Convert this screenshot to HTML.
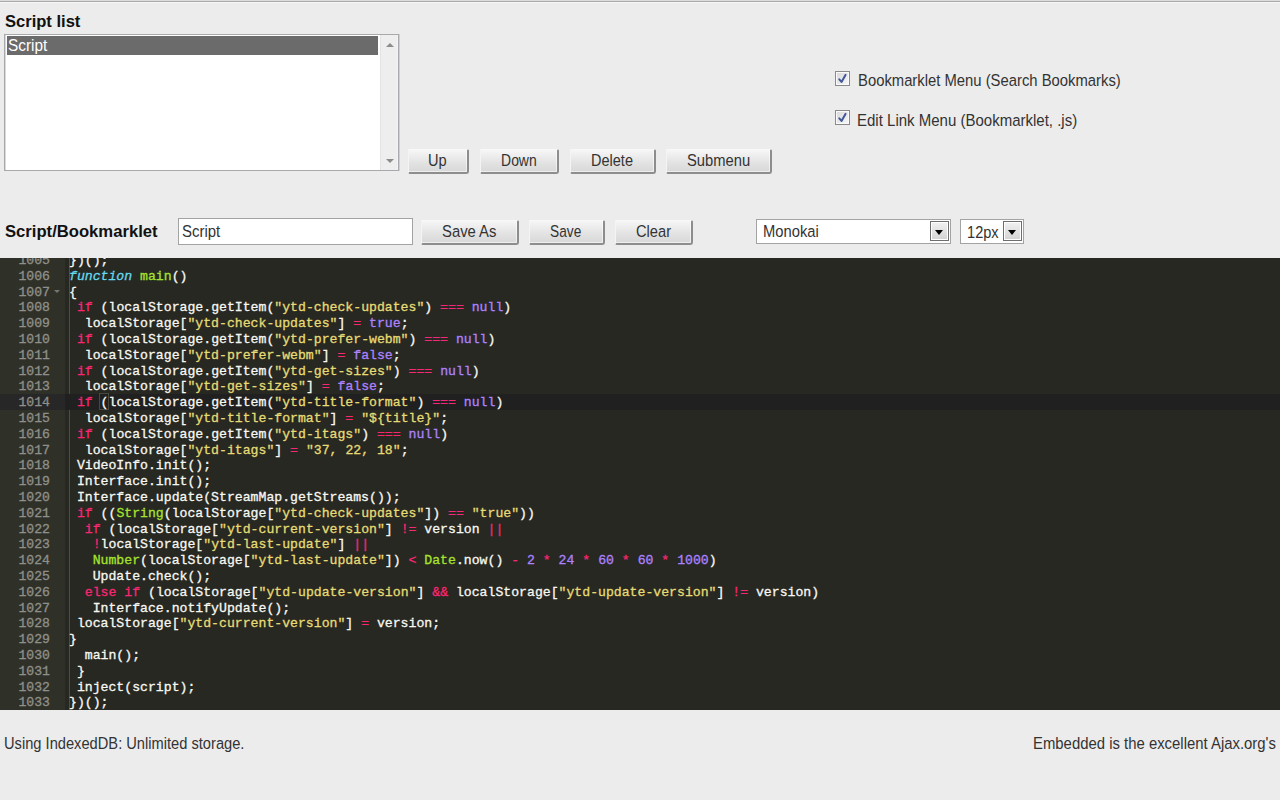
<!DOCTYPE html>
<html><head><meta charset="utf-8">
<style>
html,body{margin:0;padding:0;width:1280px;height:800px;overflow:hidden;background:#ececec;font-family:"Liberation Sans",sans-serif;color:#222;}
.tx{position:absolute;white-space:pre;font-family:"Liberation Sans",sans-serif;}
.tx.b{font-weight:bold;}
.topline{position:absolute;left:0;top:0;width:1280px;height:1px;background:#dcdcdc;}
.topline2{position:absolute;left:0;top:1px;width:1280px;height:1px;background:#a9a9a9;}
.topline3{position:absolute;left:0;top:2px;width:1280px;height:1px;background:#f7f7f7;}
.list{position:absolute;left:4px;top:34px;width:393px;height:135px;border:1px solid #a7a9ad;background:#fff;box-shadow:inset 1px 0 0 #d9d9d9,1px 0 0 #cdd0d4;}
.sel{position:absolute;left:2px;top:1px;width:371px;height:19px;background:#6b6b6b;}
.sb{position:absolute;right:0;top:0;width:18px;height:135px;background:#eeeeee;border-left:1px solid #e3e3e3;border-right:1px solid #f4f4f4;box-sizing:border-box;}
.sb .up{position:absolute;left:4.5px;top:8px;border-left:4px solid transparent;border-right:4px solid transparent;border-bottom:4.5px solid #8c8c8c;}
.sb .dn{position:absolute;left:4.5px;top:124px;border-left:4px solid transparent;border-right:4px solid transparent;border-top:4.5px solid #8c8c8c;}
.btn{position:absolute;height:25px;box-sizing:border-box;border-top:1px solid #f8f8f8;border-left:1px solid #f4f4f4;border-right:2px solid #8d8d8d;border-bottom:2px solid #8d8d8d;border-radius:0 2px 3px 2px;background:linear-gradient(#f6f6f6,#e2e2e2 60%,#d8d8d8);box-shadow:inset -1px -1px 0 rgba(255,255,255,0.55);}
.inp{position:absolute;box-sizing:border-box;border:1px solid #a3a3a3;background:#fff;height:27px;}
.selbox{position:absolute;box-sizing:border-box;border:1px solid #a3a3a3;background:#fff;height:25px;}
.dd{position:absolute;box-sizing:border-box;top:1px;width:19px;height:20px;border:1px solid #6e6e6e;background:linear-gradient(#f2f2f2,#d2d2d2);box-shadow:inset 0 0 0 1px #fff;}
.dd:after{content:"";position:absolute;left:4px;top:8px;border-left:4.5px solid transparent;border-right:4.5px solid transparent;border-top:5px solid #000;}
.cb{position:absolute;width:15px;height:15px;box-sizing:border-box;border:1px solid #8a8a8a;background:linear-gradient(135deg,#d8d8d8,#f8f8f8);box-shadow:inset 0 0 0 1px #fafafa;}
.cb svg{position:absolute;left:-1px;top:-1px;}
.editor{position:absolute;left:0;top:258px;width:1280px;height:452px;background:#272822;overflow:hidden;}
.gutter{position:absolute;left:0;top:0;width:65px;height:452px;background:#2f3129;}
.actg{position:absolute;left:0;width:65px;height:15.8px;background:#272727;}
.actc{position:absolute;left:65px;width:1215px;height:15.8px;background:#202020;}
.brk{position:absolute;box-sizing:border-box;border:1px solid #49483e;}
.fold{position:absolute;left:54px;border-left:3px solid transparent;border-right:3px solid transparent;border-top:3.5px solid #75756f;}
.guide{position:absolute;left:69px;width:1px;background:#4e4e47;}
.lines{position:absolute;left:0;top:-5px;width:1280px;}
.ln{position:relative;height:15.8px;}
.num{position:absolute;left:0;width:50px;text-align:right;font-family:"Liberation Mono",monospace;font-size:13.17px;line-height:15.8px;color:#8f908a;white-space:pre;-webkit-text-stroke:0.3px currentColor;}
.code{position:absolute;left:69px;font-family:"Liberation Mono",monospace;font-size:13.17px;line-height:15.8px;color:#f8f8f2;white-space:pre;-webkit-text-stroke:0.3px currentColor;}
.k{color:#f92672}.c{color:#ae81ff}.s{color:#e6db74}.f{color:#a6e22e}.st{color:#66d9ef;font-style:italic}

</style></head><body>
<div class="topline"></div><div class="topline2"></div><div class="topline3"></div>
<div class="list"><div class="sel"></div><div class="sb"><div class="up"></div><div class="dn"></div></div></div>
<div class="btn" style="left:408px;top:149px;width:61px"></div>
<div class="btn" style="left:480px;top:149px;width:79px"></div>
<div class="btn" style="left:570px;top:149px;width:86px"></div>
<div class="btn" style="left:666px;top:149px;width:106px"></div>
<div class="cb" style="left:835px;top:71px"><svg width="15" height="15"><polyline points="4.3,8.3 6.5,10.9 10.5,3.9" fill="none" stroke="#42569a" stroke-width="2.0" stroke-linecap="round" stroke-linejoin="round"/></svg></div>
<div class="cb" style="left:835px;top:110px"><svg width="15" height="15"><polyline points="4.3,8.3 6.5,10.9 10.5,3.9" fill="none" stroke="#42569a" stroke-width="2.0" stroke-linecap="round" stroke-linejoin="round"/></svg></div>
<div class="inp" style="left:178px;top:218px;width:235px"></div>
<div class="btn" style="left:421px;top:220px;width:98px"></div>
<div class="btn" style="left:529px;top:220px;width:76px"></div>
<div class="btn" style="left:615px;top:220px;width:78px"></div>
<div class="selbox" style="left:756px;top:219px;width:195px"><div class="dd" style="left:173px"></div></div>
<div class="selbox" style="left:960px;top:219px;width:64px"><div class="dd" style="left:42px"></div></div>
<div class="tx b" style="left:5.25px;top:13.5px;font-size:16.6px;line-height:16.6px;color:#111;transform:scale(0.9966,1.0);transform-origin:1px 7px;">Script list</div>
<div class="tx" style="left:8.40px;top:37.1px;font-size:15px;line-height:15px;color:#fff;transform:scale(1.0257,1.1);transform-origin:1px 7.5px;">Script</div>
<div class="tx" style="left:428.40px;top:152.4px;font-size:15px;line-height:15px;color:#333;transform:scale(0.9722,1.1);transform-origin:1px 7.5px;">Up</div>
<div class="tx" style="left:500.90px;top:152.3px;font-size:15px;line-height:15px;color:#333;transform:scale(0.9284,1.1);transform-origin:1px 7.5px;">Down</div>
<div class="tx" style="left:590.70px;top:152.3px;font-size:15px;line-height:15px;color:#333;transform:scale(0.9667,1.1);transform-origin:1px 7.5px;">Delete</div>
<div class="tx" style="left:686.80px;top:152.3px;font-size:15px;line-height:15px;color:#333;transform:scale(0.9831,1.1);transform-origin:1px 7.5px;">Submenu</div>
<div class="tx" style="left:857.50px;top:72.2px;font-size:15px;line-height:15px;color:#333;transform:scale(0.9879,1.1);transform-origin:1px 7.5px;">Bookmarklet Menu (Search Bookmarks)</div>
<div class="tx" style="left:856.90px;top:112.0px;font-size:15px;line-height:15px;color:#333;transform:scale(1.0005,1.1);transform-origin:1px 7.5px;">Edit Link Menu (Bookmarklet, .js)</div>
<div class="tx b" style="left:5.00px;top:224.0px;font-size:16.6px;line-height:16.6px;color:#111;transform:scale(1.0026,1.0);transform-origin:1px 7px;">Script/Bookmarklet</div>
<div class="tx" style="left:182.40px;top:223.3px;font-size:15px;line-height:15px;color:#333;transform:scale(0.9973,1.1);transform-origin:1px 7.5px;">Script</div>
<div class="tx" style="left:441.60px;top:223.1px;font-size:15px;line-height:15px;color:#333;transform:scale(0.9889,1.1);transform-origin:1px 7.5px;">Save As</div>
<div class="tx" style="left:550.40px;top:223.2px;font-size:15px;line-height:15px;color:#333;transform:scale(0.9121,1.1);transform-origin:1px 7.5px;">Save</div>
<div class="tx" style="left:635.70px;top:223.35px;font-size:15px;line-height:15px;color:#333;transform:scale(0.9771,1.1);transform-origin:1px 7.5px;">Clear</div>
<div class="tx" style="left:762.50px;top:223.1px;font-size:15px;line-height:15px;color:#333;transform:scale(0.9836,1.1);transform-origin:1px 7.5px;">Monokai</div>
<div class="tx" style="left:967.40px;top:223.5px;font-size:15px;line-height:15px;color:#333;transform:scale(0.9710,1.1);transform-origin:1px 7.5px;">12px</div>
<div class="tx" style="left:3.50px;top:735.2px;font-size:15px;line-height:15px;color:#333;transform:scale(0.9775,1.1);transform-origin:1px 7.5px;">Using IndexedDB: Unlimited storage.</div>
<div class="tx" style="left:1032.80px;top:735.1px;font-size:15px;line-height:15px;color:#333;transform:scale(0.9926,1.1);transform-origin:1px 7.5px;">Embedded is the excellent Ajax.org&#x27;s</div>
<div class="editor">
<div class="gutter"></div>
<div class="actg" style="top:136px"></div>
<div class="actc" style="top:136px"></div>
<div class="guide" style="top:0;height:135.5px"></div>
<div class="guide" style="top:151.6px;height:300.4px"></div>
<div class="brk" style="left:99.4px;top:135.2px;width:10px;height:17px"></div>
<div class="fold" style="top:32px"></div>
<div class="lines">
<div class="ln"><div class="num">1005</div><div class="code">})();</div></div>
<div class="ln"><div class="num">1006</div><div class="code"><span class="st">function</span> <span class="f">main</span>()</div></div>
<div class="ln"><div class="num">1007</div><div class="code">{</div></div>
<div class="ln"><div class="num">1008</div><div class="code"> <span class="k">if</span> (localStorage.getItem(<span class="s">"ytd-check-updates"</span>) <span class="k">===</span> <span class="c">null</span>)</div></div>
<div class="ln"><div class="num">1009</div><div class="code">  localStorage[<span class="s">"ytd-check-updates"</span>] <span class="k">=</span> <span class="c">true</span>;</div></div>
<div class="ln"><div class="num">1010</div><div class="code"> <span class="k">if</span> (localStorage.getItem(<span class="s">"ytd-prefer-webm"</span>) <span class="k">===</span> <span class="c">null</span>)</div></div>
<div class="ln"><div class="num">1011</div><div class="code">  localStorage[<span class="s">"ytd-prefer-webm"</span>] <span class="k">=</span> <span class="c">false</span>;</div></div>
<div class="ln"><div class="num">1012</div><div class="code"> <span class="k">if</span> (localStorage.getItem(<span class="s">"ytd-get-sizes"</span>) <span class="k">===</span> <span class="c">null</span>)</div></div>
<div class="ln"><div class="num">1013</div><div class="code">  localStorage[<span class="s">"ytd-get-sizes"</span>] <span class="k">=</span> <span class="c">false</span>;</div></div>
<div class="ln"><div class="num">1014</div><div class="code"> <span class="k">if</span> (localStorage.getItem(<span class="s">"ytd-title-format"</span>) <span class="k">===</span> <span class="c">null</span>)</div></div>
<div class="ln"><div class="num">1015</div><div class="code">  localStorage[<span class="s">"ytd-title-format"</span>] <span class="k">=</span> <span class="s">"${title}"</span>;</div></div>
<div class="ln"><div class="num">1016</div><div class="code"> <span class="k">if</span> (localStorage.getItem(<span class="s">"ytd-itags"</span>) <span class="k">===</span> <span class="c">null</span>)</div></div>
<div class="ln"><div class="num">1017</div><div class="code">  localStorage[<span class="s">"ytd-itags"</span>] <span class="k">=</span> <span class="s">"37, 22, 18"</span>;</div></div>
<div class="ln"><div class="num">1018</div><div class="code"> VideoInfo.init();</div></div>
<div class="ln"><div class="num">1019</div><div class="code"> Interface.init();</div></div>
<div class="ln"><div class="num">1020</div><div class="code"> Interface.update(StreamMap.getStreams());</div></div>
<div class="ln"><div class="num">1021</div><div class="code"> <span class="k">if</span> ((<span class="f">String</span>(localStorage[<span class="s">"ytd-check-updates"</span>]) <span class="k">==</span> <span class="s">"true"</span>))</div></div>
<div class="ln"><div class="num">1022</div><div class="code">  <span class="k">if</span> (localStorage[<span class="s">"ytd-current-version"</span>] <span class="k">!=</span> version <span class="k">||</span></div></div>
<div class="ln"><div class="num">1023</div><div class="code">   <span class="k">!</span>localStorage[<span class="s">"ytd-last-update"</span>] <span class="k">||</span></div></div>
<div class="ln"><div class="num">1024</div><div class="code">   <span class="f">Number</span>(localStorage[<span class="s">"ytd-last-update"</span>]) <span class="k">&lt;</span> <span class="f">Date</span>.now() <span class="k">-</span> <span class="c">2</span> <span class="k">*</span> <span class="c">24</span> <span class="k">*</span> <span class="c">60</span> <span class="k">*</span> <span class="c">60</span> <span class="k">*</span> <span class="c">1000</span>)</div></div>
<div class="ln"><div class="num">1025</div><div class="code">   Update.check();</div></div>
<div class="ln"><div class="num">1026</div><div class="code">  <span class="k">else</span> <span class="k">if</span> (localStorage[<span class="s">"ytd-update-version"</span>] <span class="k">&amp;&amp;</span> localStorage[<span class="s">"ytd-update-version"</span>] <span class="k">!=</span> version)</div></div>
<div class="ln"><div class="num">1027</div><div class="code">   Interface.notifyUpdate();</div></div>
<div class="ln"><div class="num">1028</div><div class="code"> localStorage[<span class="s">"ytd-current-version"</span>] <span class="k">=</span> version;</div></div>
<div class="ln"><div class="num">1029</div><div class="code">}</div></div>
<div class="ln"><div class="num">1030</div><div class="code">  main();</div></div>
<div class="ln"><div class="num">1031</div><div class="code"> }</div></div>
<div class="ln"><div class="num">1032</div><div class="code"> inject(script);</div></div>
<div class="ln"><div class="num">1033</div><div class="code">})();</div></div>
</div>
</div>
</body></html>
